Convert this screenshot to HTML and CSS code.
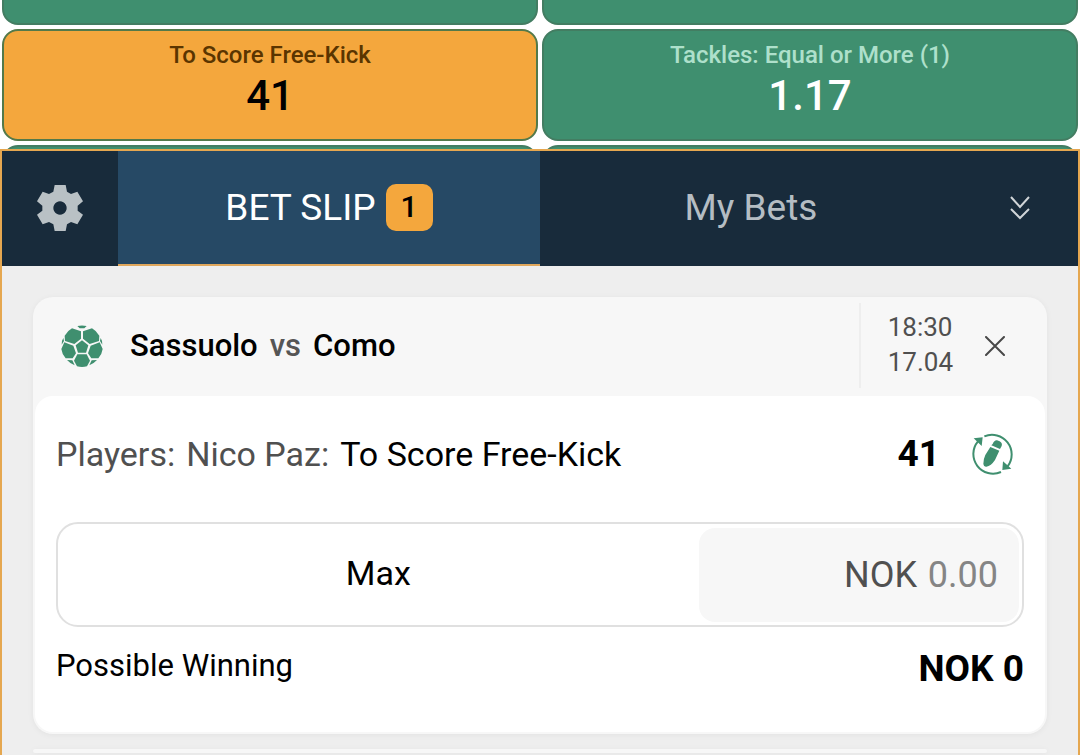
FILE: index.html
```html
<!DOCTYPE html>
<html lang="en">
<head>
<meta charset="utf-8">
<meta name="viewport" content="width=device-width, initial-scale=1">
<title>Bet Slip</title>
<link rel="stylesheet" href="styles.css">
</head>
<body>
<div class="app">
  <section class="markets">
    <div class="markets-grid">
      <div class="market"></div>
      <div class="market"></div>
      <button class="market selected" type="button"><span class="market-name">To Score Free-Kick</span><span class="market-odds">41</span></button>
      <button class="market" type="button"><span class="market-name">Tackles: Equal or More (1)</span><span class="market-odds">1.17</span></button>
      <div class="market"></div>
      <div class="market"></div>
    </div>
  </section>

  <section class="slip">
    <nav class="tabs">
      <button class="tab settings" type="button" aria-label="Settings">
        <svg class="icon-gear" viewBox="26 24 138 138" aria-hidden="true"><path fill-rule="evenodd" d="M79 24H112L116 44L128 51L147 44L164 73L148 86V101L164 113L147 142L128 135L116 142L112 162H79L75 142L62 135L43 142L26 113L42 101V86L26 73L43 44L62 51L75 44ZM95 73a20 20 0 1 0 0.01 0Z"/></svg>
      </button>
      <button class="tab active" type="button"><span>BET SLIP</span><span class="badge">1</span></button>
      <button class="tab bets" type="button">My Bets</button>
      <button class="tab collapse" type="button" aria-label="Collapse">
        <svg class="icon-chevrons" viewBox="0 0 20 24" aria-hidden="true"><path d="M1 1L10 11L19 1M1 13L10 22L19 13"/></svg>
      </button>
    </nav>

    <div class="slip-body">
      <article class="card">
        <header class="card-head">
          <svg class="icon-ball" viewBox="9 6 126 126" aria-hidden="true">
            <path d="M72 52L91 67L84 89H60L53 67Z"/>
            <path d="M20 38Q28 24 42 16L69 25V47L49 63L21 54ZM124 38Q116 24 102 16L75 25V47L95 63L123 54Z"/>
            <path d="M19 58L46 68L54 91L44 106H23Q12 94 10 78ZM125 58L98 68L90 91L100 106H121Q132 94 134 78Z"/>
            <path d="M58 94H86L96 113L87 130Q72 134 57 130L48 113Z"/>
            <path d="M58 9Q72 6 86 9L79 16H65ZM11 65Q10 54 16 45L18 54ZM133 65Q134 54 128 45L126 54ZM27 111L43 112L50 127Q37 122 27 111ZM117 111L101 112L94 127Q107 122 117 111Z"/>
          </svg>
          <h2 class="teams"><span>Sassuolo</span><span class="versus">vs</span><span>Como</span></h2>
          <div class="kickoff"><time>18:30</time><time>17.04</time></div>
          <button class="remove" type="button" aria-label="Remove bet">
            <svg class="icon-close" viewBox="0 0 20 20" aria-hidden="true"><path d="M1 1L19 19M19 1L1 19"/></svg>
          </button>
        </header>
        <div class="card-body">
          <div class="selection">
            <p class="pick"><span class="pick-group">Players:</span><span class="pick-group">Nico Paz:</span><span>To Score Free-Kick</span></p>
            <strong class="pick-odds">41</strong>
            <button class="edit" type="button" aria-label="Edit bet">
              <svg class="icon-edit" viewBox="31 28 126 126" aria-hidden="true">
                <path class="ring" d="M68 38A59 59 0 0 1 138 128M118 145A59 59 0 0 1 49 53"/>
                <path d="M36 44L63 41L60 67ZM124 113L149 135L122 139Z"/>
                <path d="M93 61Q98 49 106 50L114 53Q123 58 120 67L115 76L89 65ZM86 70L113 81L100 109Q88 127 74 129Q66 130 65 121Q65 106 71 94Z"/>
              </svg>
            </button>
          </div>
          <div class="stake">
            <button class="max" type="button">Max</button>
            <label class="amount"><span>NOK</span><input class="amount-input" type="text" inputmode="decimal" placeholder="0.00"></label>
          </div>
          <div class="winning"><span>Possible Winning</span><strong class="winning-sum">NOK 0</strong></div>
        </div>
      </article>
      <div class="next-card"></div>
    </div>
  </section>
</div>
</body>
</html>
```
FILE: styles.css
```css
* { box-sizing: border-box; }
body { margin: 0; background: #fff; color: #000; font-family: Roboto, sans-serif; }
button { margin: 0; padding: 0; border: 0; background: none; color: inherit; font: inherit; cursor: pointer; }
svg { display: block; flex: none; }

.app { display: flex; flex-direction: column; height: 100vh; overflow: hidden; }

.markets { flex: none; height: 149px; overflow: hidden; }
.markets-grid { display: grid; grid-template-columns: 1fr 1fr; grid-auto-rows: 112px; gap: 4px; margin-top: -87px; padding: 0 2px; }
.market { display: flex; flex-direction: column; align-items: center; padding-top: 10px; border: 2px solid #437d62; border-radius: 16px; background: #3f8f6f; color: #fff; }
.market-name { font-size: 24px; line-height: 28px; font-weight: 500; color: #aee0cb; }
.market-odds { font-size: 42px; line-height: 54px; font-weight: 500; }
.market.selected { border-color: #53794a; background: #f4a73d; color: #000; }
.selected .market-name { color: #5a3500; }

.slip { flex: 1; display: flex; flex-direction: column; border: 2px solid #e5a750; border-bottom: 0; background: #eee; }
.tabs { flex: none; display: flex; height: 115px; background: #182b3b; color: #b5bdc3; }
.tab { display: flex; align-items: center; justify-content: center; padding-bottom: 2px; font-size: 37px; line-height: 44px; }
.settings { width: 116px; }
.icon-gear { width: 46px; height: 46px; fill: #b9c1c5; }
.active { flex: 422; gap: 10px; padding: 0; border-bottom: 2px solid #e0a75c; background: #264965; color: #fff; }
.badge { width: 47px; height: 47px; border-radius: 10px; background: #f4a73d; color: #000; font-size: 30px; line-height: 46px; font-weight: 500; }
.bets { flex: 422; }
.collapse { width: 116px; }
.icon-chevrons { width: 20px; height: 24px; fill: none; stroke: #d0d5d8; stroke-width: 2; }

.slip-body { flex: 1; padding: 31px 31px 0; }
.card { padding: 0 2px 2px; border-radius: 20px; background: #f7f7f7; box-shadow: 0 1px 6px rgba(0, 0, 0, 0.05); }
.card-head { display: flex; align-items: center; height: 99px; padding: 0 25px 2px 26px; }
.icon-ball { width: 42px; height: 42px; fill: #3f8f6f; }
.teams { flex: 1; display: flex; gap: 12px; margin: 0 0 0 27px; font-size: 31px; line-height: 40px; font-weight: 500; }
.versus { color: #555; }
.kickoff { display: flex; flex-direction: column; height: 85px; justify-content: center; padding: 0 17px 2px 27px; border-left: 2px solid #eee; color: #505050; font-size: 26px; line-height: 35px; }
.remove { padding: 15px; }
.icon-close { width: 20px; height: 20px; fill: none; stroke: #484848; stroke-width: 2; stroke-linecap: round; }

.card-body { padding: 36px 21px 40px; border-radius: 18px; background: #fff; }
.selection { display: flex; align-items: center; height: 44px; padding-right: 10px; }
.pick { flex: 1; display: flex; flex-wrap: wrap; gap: 11px; margin: 0; font-size: 34px; line-height: 42px; }
.pick-group { color: #505050; }
.pick-odds { font-size: 37px; line-height: 44px; font-weight: 700; }
.edit { margin-left: 32px; }
.icon-edit { width: 42px; height: 42px; fill: #3f8f6f; }
.ring { fill: none; stroke: #3f8f6f; stroke-width: 6; }
.stake { display: flex; height: 105px; margin-top: 46px; padding: 4px 3px 3px 0; border: 2px solid #e0e0e0; border-radius: 22px; }
.max { flex: 2 1 0; padding-bottom: 4px; font-size: 34px; line-height: 40px; }
.amount { flex: 1 1 0; display: flex; align-items: center; justify-content: flex-end; gap: 9px; min-width: 0; border-radius: 16px; background: #f7f7f7; color: #505050; font-size: 36px; line-height: 44px; }
.amount-input { width: 93px; padding: 0 21px 0 0; border: 0; outline: 0; background: transparent; color: #505050; font: inherit; text-align: right; }
.amount-input::placeholder { color: #858585; opacity: 1; }
.winning { display: flex; justify-content: space-between; margin-top: 19px; font-size: 31px; line-height: 40px; }
.winning-sum { font-size: 37px; line-height: 46px; font-weight: 700; }

.next-card { height: 4px; margin-top: 15px; border-radius: 2px; background: #f7f7f7; box-shadow: 0 1px 6px rgba(0, 0, 0, 0.05); }
```
